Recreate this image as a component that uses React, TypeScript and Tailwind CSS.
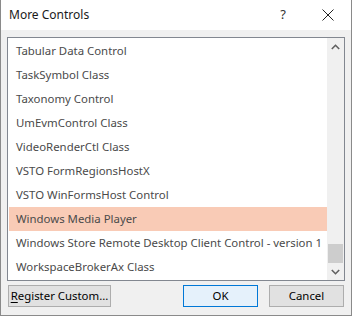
import React from 'react'

const items = [
  'Tabular Data Control',
  'TaskSymbol Class',
  'Taxonomy Control',
  'UmEvmControl Class',
  'VideoRenderCtl Class',
  'VSTO FormRegionsHostX',
  'VSTO WinFormsHost Control',
  'Windows Media Player',
  'Windows Store Remote Desktop Client Control - version 1',
  'WorkspaceBrokerAx Class',
]

const App = () => {
  return (
    <div
      className="flex h-[316px] w-[352px] flex-col border-x border-b border-[#8a8a8a] bg-[#f0f0f0] text-[11.4px] text-black"
      style={{ fontFamily: '"Segoe UI", "Noto Sans", sans-serif' }}
    >
      {/* title bar */}
      <div className="flex h-[30px] items-center bg-white">
        <span className="ml-[8px] text-[12px] text-[#1a1a1a]">More Controls</span>
        <span className="ml-auto mr-[36px] text-[13px] text-[#333]">?</span>
        <svg className="mr-[17px]" width="12" height="12" viewBox="0 0 12 12">
          <path d="M0.5 0.5 L11.5 11.5 M11.5 0.5 L0.5 11.5" stroke="#222" strokeWidth="1" />
        </svg>
      </div>

      {/* list */}
      <div className="mx-[6px] mt-[7px] flex h-[244px] overflow-hidden border border-[#828790] bg-white">
        <div className="flex min-w-0 flex-1 flex-col pt-[1px] pl-[1px]">
          {items.map((item, i) => (
            <div
              key={item}
              className={
                'flex h-[24px] shrink-0 items-center whitespace-nowrap pl-[7px] text-[#4a4a4a] ' +
                (i === 7 ? 'bg-[#f9cbb6]' : '')
              }
            >
              {item}
            </div>
          ))}
        </div>
        <div className="flex w-[17px] shrink-0 flex-col bg-[#f0f0f0]">
          <div className="flex h-[17px] items-center justify-center">
            <svg width="9" height="6" viewBox="0 0 9 6">
              <path d="M0.8 5 L4.5 1.3 L8.2 5" fill="none" stroke="#606060" strokeWidth="1.6" />
            </svg>
          </div>
          <div className="flex-1" />
          <div className="mx-[1px] h-[19px] bg-[#cdcdcd]" />
          <div className="flex h-[17px] items-center justify-center">
            <svg width="9" height="6" viewBox="0 0 9 6">
              <path d="M0.8 1 L4.5 4.7 L8.2 1" fill="none" stroke="#606060" strokeWidth="1.6" />
            </svg>
          </div>
        </div>
      </div>

      {/* buttons */}
      <div className="mt-[4px] flex items-center px-[7px]">
        <button className="h-[22px] w-[103px] whitespace-nowrap border border-[#adadad] bg-[#e1e1e1] text-[11.4px] text-black">
          <span className="underline underline-offset-2">R</span>egister Custom...
        </button>
        <button className="ml-auto h-[22px] w-[75px] border border-[#0078d7] bg-[#e5f1fb] text-[11.4px] text-black">
          OK
        </button>
        <button className="ml-[11px] h-[22px] w-[75px] border border-[#adadad] bg-[#e1e1e1] text-[11.4px] text-black">
          Cancel
        </button>
      </div>
    </div>
  )
}

export default App
